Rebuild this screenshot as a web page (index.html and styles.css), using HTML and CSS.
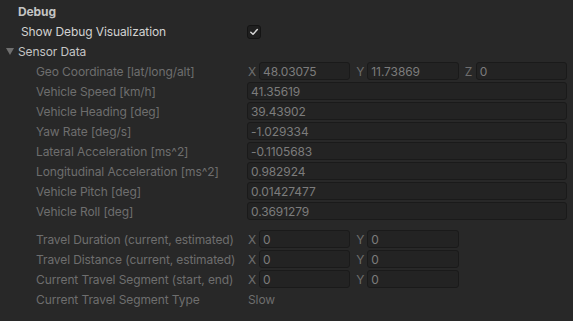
FILE: index.html
```html
<!DOCTYPE html>
<html>
<head>
<meta charset="utf-8">
<link rel="stylesheet" href="styles.css">
</head>
<body>
<div class="panel">
  <div class="row header"><span class="title">Debug</span></div>
  <div class="row toggle-row">
    <span class="toggle-label">Show Debug Visualization</span>
    <span class="checkbox">
      <svg width="10" height="10" viewBox="0 0 10 10"><path d="M1.8 5.2 L4 7.3 L8.3 2.6" fill="none" stroke="#d6d6d6" stroke-width="1.5" stroke-linecap="round" stroke-linejoin="round"/></svg>
    </span>
  </div>
  <div class="row foldout">
    <span class="arrow"></span><span class="fold-label">Sensor Data</span>
  </div>
  <div class="group">
    <div class="row prop">
      <span class="label">Geo Coordinate [lat/long/alt]</span>
      <div class="vec">
        <div class="comp"><span class="axis">X</span><span class="field">48.03075</span></div>
        <div class="comp"><span class="axis">Y</span><span class="field">11.73869</span></div>
        <div class="comp"><span class="axis">Z</span><span class="field">0</span></div>
      </div>
    </div>
    <div class="row prop"><span class="label">Vehicle Speed [km/h]</span><span class="field">41.35619</span></div>
    <div class="row prop"><span class="label">Vehicle Heading [deg]</span><span class="field">39.43902</span></div>
    <div class="row prop"><span class="label">Yaw Rate [deg/s]</span><span class="field">-1.029334</span></div>
    <div class="row prop"><span class="label">Lateral Acceleration [ms^2]</span><span class="field">-0.1105683</span></div>
    <div class="row prop"><span class="label">Longitudinal Acceleration [ms^2]</span><span class="field">0.982924</span></div>
    <div class="row prop"><span class="label">Vehicle Pitch [deg]</span><span class="field">0.01427477</span></div>
    <div class="row prop"><span class="label">Vehicle Roll [deg]</span><span class="field">0.3691279</span></div>

    <div class="spacer"></div>

    <div class="row prop">
      <span class="label">Travel Duration (current, estimated)</span>
      <div class="vec">
        <div class="comp"><span class="axis">X</span><span class="field">0</span></div>
        <div class="comp"><span class="axis">Y</span><span class="field">0</span></div>
      </div>
    </div>
    <div class="row prop">
      <span class="label">Travel Distance (current, estimated)</span>
      <div class="vec">
        <div class="comp"><span class="axis">X</span><span class="field">0</span></div>
        <div class="comp"><span class="axis">Y</span><span class="field">0</span></div>
      </div>
    </div>
    <div class="row prop">
      <span class="label">Current Travel Segment (start, end)</span>
      <div class="vec">
        <div class="comp"><span class="axis">X</span><span class="field">0</span></div>
        <div class="comp"><span class="axis">Y</span><span class="field">0</span></div>
      </div>
    </div>
    <div class="row prop">
      <span class="label">Current Travel Segment Type</span>
      <span class="plain">Slow</span>
    </div>
  </div>
</div>
</body>
</html>
```

FILE: styles.css
```css
html, body {
  margin: 0;
  padding: 0;
  background: #282828;
  width: 573px;
  height: 321px;
  overflow: hidden;
}

.panel {
  font-family: Inter, "Noto Sans", sans-serif;
  font-size: 12px;
  letter-spacing: -0.1px;
  padding: 2px 6px 0 0;
  box-sizing: border-box;
  width: 573px;
}

.row {
  height: 18px;
  margin-bottom: 2px;
  display: flex;
  align-items: center;
  white-space: nowrap;
}

.header .title {
  padding-left: 18px;
  font-weight: 700;
  color: #c4c4c4;
}

.toggle-row {
  display: grid;
  grid-template-columns: 247px 1fr;
}

.toggle-label {
  padding-left: 21px;
  color: #d2d2d2;
}

.checkbox {
  width: 12px;
  height: 12px;
  border: 1px solid #141414;
  border-radius: 3px;
  background: #1f1f1f;
  display: flex;
  align-items: center;
  justify-content: center;
  margin-top: 1px;
}

.foldout .arrow {
  margin-left: 6px;
  width: 0;
  height: 0;
  border-left: 4px solid transparent;
  border-right: 4px solid transparent;
  border-top: 7px solid #6f6f6f;
  margin-right: 4px;
}

.fold-label {
  color: #c4c4c4;
}

.prop {
  display: grid;
  grid-template-columns: 247px 1fr;
}

.label {
  padding-left: 36px;
  color: #6e6e6e;
}

.field {
  height: 18px;
  box-sizing: border-box;
  background: #232323;
  border: 1px solid #1a1a1a;
  border-radius: 3px;
  color: #7c7c7c;
  padding-left: 3px;
  display: flex;
  align-items: center;
  overflow: hidden;
}

.vec {
  display: grid;
  grid-template-columns: repeat(3, 1fr);
  column-gap: 5px;
}

.comp {
  display: grid;
  grid-template-columns: 12px 1fr;
  align-items: center;
}

.axis {
  color: #6e6e6e;
  padding-left: 1px;
}

.plain {
  color: #6e6e6e;
  padding-left: 1px;
}

.spacer {
  height: 8px;
}
```
